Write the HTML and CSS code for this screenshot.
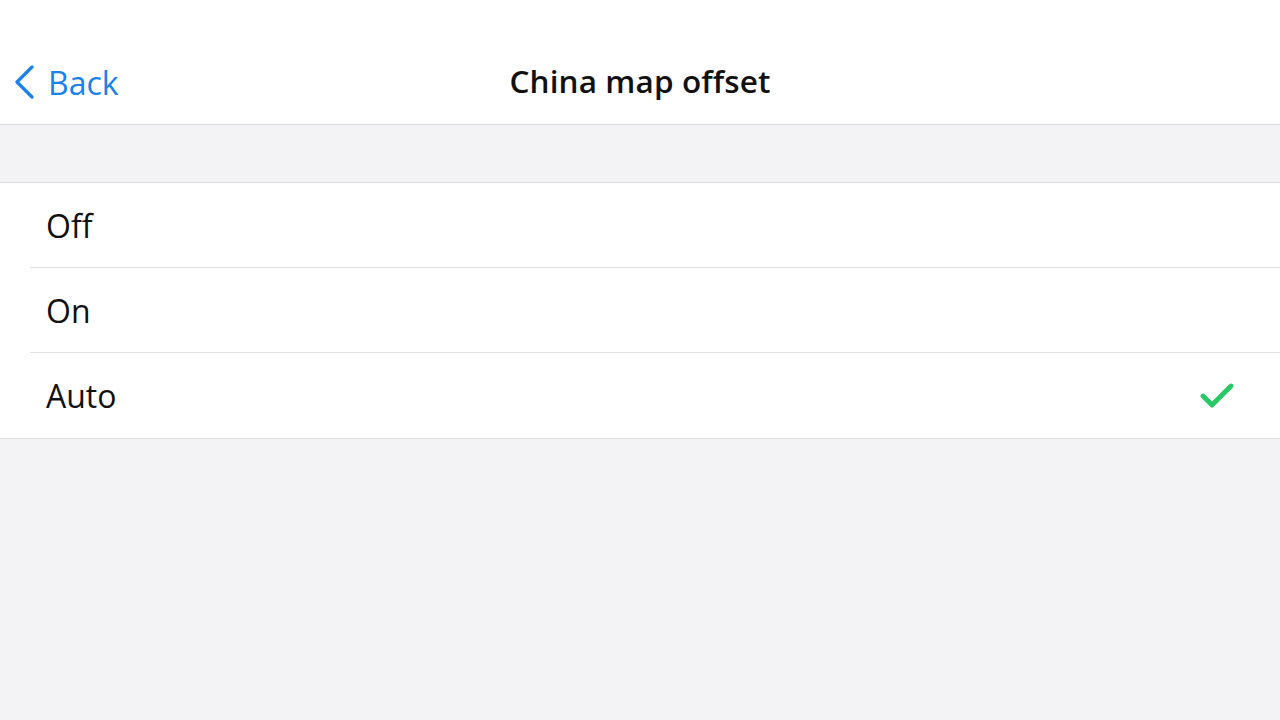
FILE: index.html
```html
<!DOCTYPE html>
<html>
<head>
<meta charset="utf-8">
<link rel="stylesheet" href="styles.css">
</head>
<body>
<header class="navbar">
  <a class="back">
    <svg class="chev" width="22" height="34" viewBox="0 0 22 34"><path d="M19 2 L4 17 L19 32" fill="none" stroke="#1a82e8" stroke-width="3.2" stroke-linecap="round" stroke-linejoin="round"/></svg>
    <span>Back</span>
  </a>
  <h1 class="title">China map offset</h1>
</header>
<div class="spacer"></div>
<ul class="list">
  <li class="row"><span>Off</span></li>
  <li class="row"><span>On</span></li>
  <li class="row"><span>Auto</span>
    <svg class="check" width="34" height="26" viewBox="0 0 34 26"><path d="M3 13 L12 22 L31 3" fill="none" stroke="#26c966" stroke-width="4.8" stroke-linecap="round" stroke-linejoin="round"/></svg>
  </li>
</ul>
</body>
</html>
```
FILE: styles.css
```css
html, body {
  margin: 0;
  padding: 0;
  height: 100%;
  background: #f3f3f5;
  font-family: "Open Sans", "Noto Sans", sans-serif;
}
.navbar {
  height: 124px;
  background: #fff;
  border-bottom: 1px solid #dcdcde;
  position: relative;
  display: flex;
  align-items: center;
  justify-content: center;
  box-sizing: content-box;
}
.back {
  position: absolute;
  left: 13px;
  top: 64px;
  display: flex;
  align-items: center;
  gap: 13px;
  color: #1a82e8;
  font-size: 32px;
  line-height: 36px;
}
.back span { position: relative; top: 1px; }
.title {
  margin: 0;
  padding-top: 36px;
  font-size: 31.5px;
  font-weight: 600;
  color: #111;
  letter-spacing: 0.1px;
}
.spacer {
  height: 57px;
}
.list {
  list-style: none;
  margin: 0;
  padding: 0;
  background: #fff;
  border-top: 1px solid #dcdcde;
  border-bottom: 1px solid #dcdcde;
}
.row {
  height: 84px;
  margin-left: 30px;
  padding-left: 16px;
  padding-right: 46px;
  display: flex;
  align-items: center;
  justify-content: space-between;
  font-size: 32px;
  color: #111;
  border-bottom: 1px solid #e2e2e4;
}
.row:last-child { border-bottom: none; height: 85px; }
```
